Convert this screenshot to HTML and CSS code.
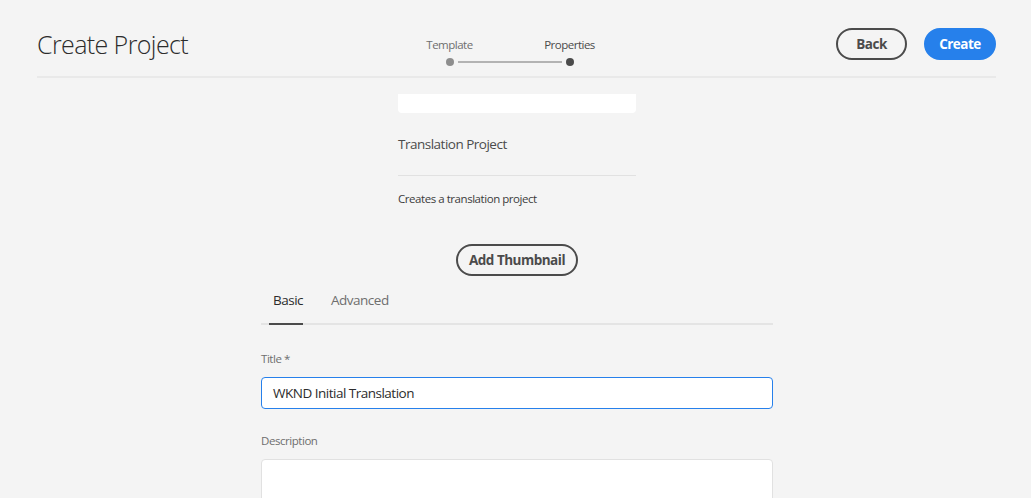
FILE: index.html
```html
<!DOCTYPE html>
<html lang="en">
<head>
<meta charset="utf-8">
<title>Create Project</title>
<link rel="stylesheet" href="styles.css">
</head>
<body>
<header class="topbar">
  <h1 class="page-title">Create Project</h1>
  <div class="steps">
    <span class="step-label">Template</span>
    <span class="step-label current">Properties</span>
    <div class="step-track">
      <span class="dot done"></span>
      <span class="track-line"></span>
      <span class="dot active"></span>
    </div>
  </div>
  <div class="actions">
    <button class="btn btn-outline">Back</button>
    <button class="btn btn-primary">Create</button>
  </div>
</header>
<main class="content">
  <section class="template-card">
    <div class="thumb"></div>
    <div class="card-title">Translation Project</div>
    <div class="card-desc">Creates a translation project</div>
  </section>
  <button class="btn btn-outline btn-thumb">Add Thumbnail</button>
  <section class="form">
    <nav class="tabs">
      <span class="tab selected">Basic</span>
      <span class="tab">Advanced</span>
    </nav>
    <label class="field-label">Title *</label>
    <div class="input focused">WKND Initial Translation</div>
    <label class="field-label desc-label">Description</label>
    <div class="textarea"></div>
  </section>
</main>
</body>
</html>
```
FILE: styles.css
```css
* { box-sizing: border-box; }
html, body { margin: 0; padding: 0; }
body {
  background: #f4f4f4;
  font-family: "Open Sans", "Noto Sans", sans-serif;
  color: #4b4b4b;
  height: 498px;
  overflow: hidden;
}
.topbar {
  margin: 0 35px 0 37px;
  height: 78px;
  border-bottom: 2px solid #e9e9e9;
  display: grid;
  grid-template-columns: 1fr auto 1fr;
  align-items: start;
}
.page-title {
  margin: 0;
  padding-top: 27px;
  font-size: 25px;
  font-weight: 300;
  color: #2c2c2c;
  letter-spacing: -0.6px;
  line-height: 34px;
}
.steps {
  display: grid;
  grid-template-columns: 120px 120px;
  margin-right: 14px;
  padding-top: 36px;
}
.step-label {
  font-size: 11.5px;
  letter-spacing: -0.5px;
  text-align: center;
  color: #6e6e6e;
  line-height: 18px;
}
.step-label.current { color: #4b4b4b; }
.step-track {
  grid-column: 1 / 3;
  display: flex;
  align-items: center;
  padding: 0 56px;
  margin-top: 4px;
}
.dot { width: 8px; height: 8px; border-radius: 50%; flex: none; }
.dot.done { background: #8e8e8e; }
.dot.active { background: #4b4b4b; }
.track-line { flex: 1; height: 2px; background: #b3b3b3; margin: 0 4px; }
.actions {
  display: flex;
  justify-content: flex-end;
  gap: 17px;
  padding-top: 28px;
}
.btn {
  font-family: inherit;
  font-size: 13.5px;
  font-weight: 700;
  letter-spacing: -0.5px;
  height: 32px;
  border-radius: 16px;
  padding: 0;
  white-space: nowrap;
  cursor: pointer;
}
.btn-outline {
  background: transparent;
  border: 2px solid #4b4b4b;
  color: #4b4b4b;
  width: 71px;
}
.btn-primary {
  background: #2680eb;
  border: 2px solid #2680eb;
  color: #fff;
  width: 72px;
}
.content {
  display: flex;
  flex-direction: column;
  align-items: center;
  padding-left: 3px;
}
.template-card {
  width: 238px;
  margin-top: 16px;
}
.thumb {
  height: 19px;
  background: #fff;
  border-radius: 0 0 4px 4px;
}
.card-title {
  font-size: 13.5px;
  letter-spacing: -0.5px;
  line-height: 20px;
  padding: 21px 0 21px;
  border-bottom: 1px solid #e1e1e1;
}
.card-desc {
  font-size: 11.5px;
  letter-spacing: -0.45px;
  line-height: 16px;
  padding-top: 15px;
  color: #3c3c3c;
}
.btn-thumb {
  width: 122px;
  margin-top: 37px;
}
.form {
  width: 512px;
  display: flex;
  flex-direction: column;
}
.tabs {
  display: flex;
  border-bottom: 2px solid #e4e4e4;
  padding-left: 8px;
  margin-top: 8px;
}
.tab {
  font-size: 13.5px;
  letter-spacing: -0.5px;
  line-height: 20px;
  padding: 6px 0 13px 4px;
  margin-right: 24px;
  margin-bottom: -2px;
  color: #6e6e6e;
}
.tab.selected {
  color: #2c2c2c;
  border-bottom: 2px solid #4b4b4b;
}
.field-label {
  font-size: 11.5px;
  letter-spacing: -0.45px;
  color: #6e6e6e;
  line-height: 16px;
  margin-top: 26px;
}
.input {
  margin-top: 10px;
  height: 32px;
  background: #fff;
  border: 1px solid #2680eb;
  border-radius: 4px;
  padding: 0 11px;
  font-size: 13.5px;
  letter-spacing: -0.5px;
  line-height: 30px;
  color: #2c2c2c;
}
.desc-label { margin-top: 24px; }
.textarea {
  margin-top: 10px;
  height: 60px;
  background: #fff;
  border: 1px solid #e1e1e1;
  border-radius: 4px;
}
```
